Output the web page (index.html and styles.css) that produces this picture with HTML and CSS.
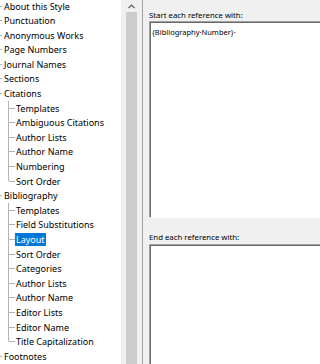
FILE: index.html
```html
<!DOCTYPE html>
<html lang="en">
<head>
  <meta charset="UTF-8">
  <title>Output Style - Layout</title>
  <link rel="stylesheet" href="styles.css">
</head>
<body>

<div class="window">
  <div class="tree-pane">
    <ul class="tree">
      <li class="node"><span class="lead"></span><span class="name">About this Style</span></li>
      <li class="node"><span class="lead"></span><span class="name">Punctuation</span></li>
      <li class="node"><span class="lead"></span><span class="name">Anonymous Works</span></li>
      <li class="node"><span class="lead"></span><span class="name">Page Numbers</span></li>
      <li class="node"><span class="lead"></span><span class="name">Journal Names</span></li>
      <li class="node"><span class="lead"></span><span class="name">Sections</span></li>
      <li class="node"><span class="lead"></span><span class="name">Citations</span></li>
      <li class="node child"><span class="branch"></span><span class="name">Templates</span></li>
      <li class="node child"><span class="branch"></span><span class="name">Ambiguous Citations</span></li>
      <li class="node child"><span class="branch"></span><span class="name">Author Lists</span></li>
      <li class="node child"><span class="branch"></span><span class="name">Author Name</span></li>
      <li class="node child"><span class="branch"></span><span class="name">Numbering</span></li>
      <li class="node child last"><span class="branch"></span><span class="name">Sort Order</span></li>
      <li class="node"><span class="lead"></span><span class="name">Bibliography</span></li>
      <li class="node child"><span class="branch"></span><span class="name">Templates</span></li>
      <li class="node child"><span class="branch"></span><span class="name">Field Substitutions</span></li>
      <li class="node child"><span class="branch"></span><span class="name selected">Layout</span></li>
      <li class="node child"><span class="branch"></span><span class="name">Sort Order</span></li>
      <li class="node child"><span class="branch"></span><span class="name">Categories</span></li>
      <li class="node child"><span class="branch"></span><span class="name">Author Lists</span></li>
      <li class="node child"><span class="branch"></span><span class="name">Author Name</span></li>
      <li class="node child"><span class="branch"></span><span class="name">Editor Lists</span></li>
      <li class="node child"><span class="branch"></span><span class="name">Editor Name</span></li>
      <li class="node child last"><span class="branch"></span><span class="name">Title Capitalization</span></li>
      <li class="node"><span class="lead"></span><span class="name">Footnotes</span></li>
    </ul>
  </div>

  <div class="scrollbar">
    <div class="arrow">
      <svg width="7" height="5" viewBox="0 0 7 5"><path d="M0.5 4 L3.5 1 L6.5 4" fill="none" stroke="#606060" stroke-width="1.2"/></svg>
    </div>
    <div class="thumb"></div>
  </div>

  <div class="gap"></div>

  <div class="panel">
    <div class="label">Start each reference with:</div>
    <div class="editbox first">
      <span class="field">{Bibliography·Number}·</span>
    </div>
    <div class="label second-label">End each reference with:</div>
    <div class="editbox"></div>
  </div>
</div>

</body>
</html>
```

FILE: styles.css
```css
* {
  box-sizing: border-box;
}

body {
  margin: 0;
  background-color: #fff;
  font-family: "Noto Sans", "Liberation Sans", sans-serif;
  color: #000;
}

.window {
  display: flex;
  width: 320px;
  height: 364px;
  overflow: hidden;
}

/* left tree */
.tree-pane {
  flex: 0 0 121px;
  background-color: #fff;
  overflow: hidden;
}

.tree {
  list-style: none;
  margin: -1.3px 0 0 0;
  padding: 0;
}

.node {
  display: flex;
  align-items: center;
  height: 14.6px;
  font-size: 9px;
  white-space: nowrap;
}

.lead {
  flex: 0 0 3px;
  height: 100%;
  background: linear-gradient(#b4b4b4, #b4b4b4) no-repeat 0 50% / 2px 1px;
}

.branch {
  flex: 0 0 15px;
  height: 100%;
  background:
    linear-gradient(#b4b4b4, #b4b4b4) no-repeat 8px 0 / 1px 100%,
    linear-gradient(#b4b4b4, #b4b4b4) no-repeat 9px 50% / 6px 1px;
}

.child.last .branch {
  background:
    linear-gradient(#b4b4b4, #b4b4b4) no-repeat 8px 0 / 1px 50%,
    linear-gradient(#b4b4b4, #b4b4b4) no-repeat 9px 50% / 6px 1px;
}

.name {
  padding: 0 1px;
  line-height: 13px;
  color: #000;
}

.name.selected {
  background-color: #0078d7;
  color: #fff;
}

/* vertical scrollbar */
.scrollbar {
  flex: 0 0 17px;
  background-color: #f0f0f0;
  display: flex;
  flex-direction: column;
}

.arrow {
  height: 12px;
  display: flex;
  align-items: center;
  justify-content: center;
  padding-left: 3px;
}

.thumb {
  width: 11px;
  margin-left: 5px;
  flex: 1;
  background-color: #cdcdcd;
}

.gap {
  flex: 0 0 4px;
  background-color: #f0f0f0;
}

/* right panel */
.panel {
  flex: 1;
  min-width: 0;
  background-color: #f0f0f0;
  border-left: 1px solid #a0a0a0;
  padding: 10px 0 0 6px;
  overflow: hidden;
}

.label {
  font-size: 7.8px;
  line-height: 10px;
  height: 11px;
  white-space: nowrap;
}

.second-label {
  margin-top: 14px;
  height: 12px;
}

.editbox {
  background-color: #fff;
  border-top: 1px solid #a0a0a0;
  border-left: 1px solid #a0a0a0;
  border-bottom: 1px solid #fff;
  box-shadow: inset 1px 1px 0 #696969;
  width: 300px;
  padding: 1px 0 0 2px;
  line-height: 12px;
}

.editbox.first {
  height: 197px;
}

.editbox:last-child {
  height: 140px;
}

.field {
  font-size: 7.5px;
  color: #000;
  white-space: nowrap;
}
```
